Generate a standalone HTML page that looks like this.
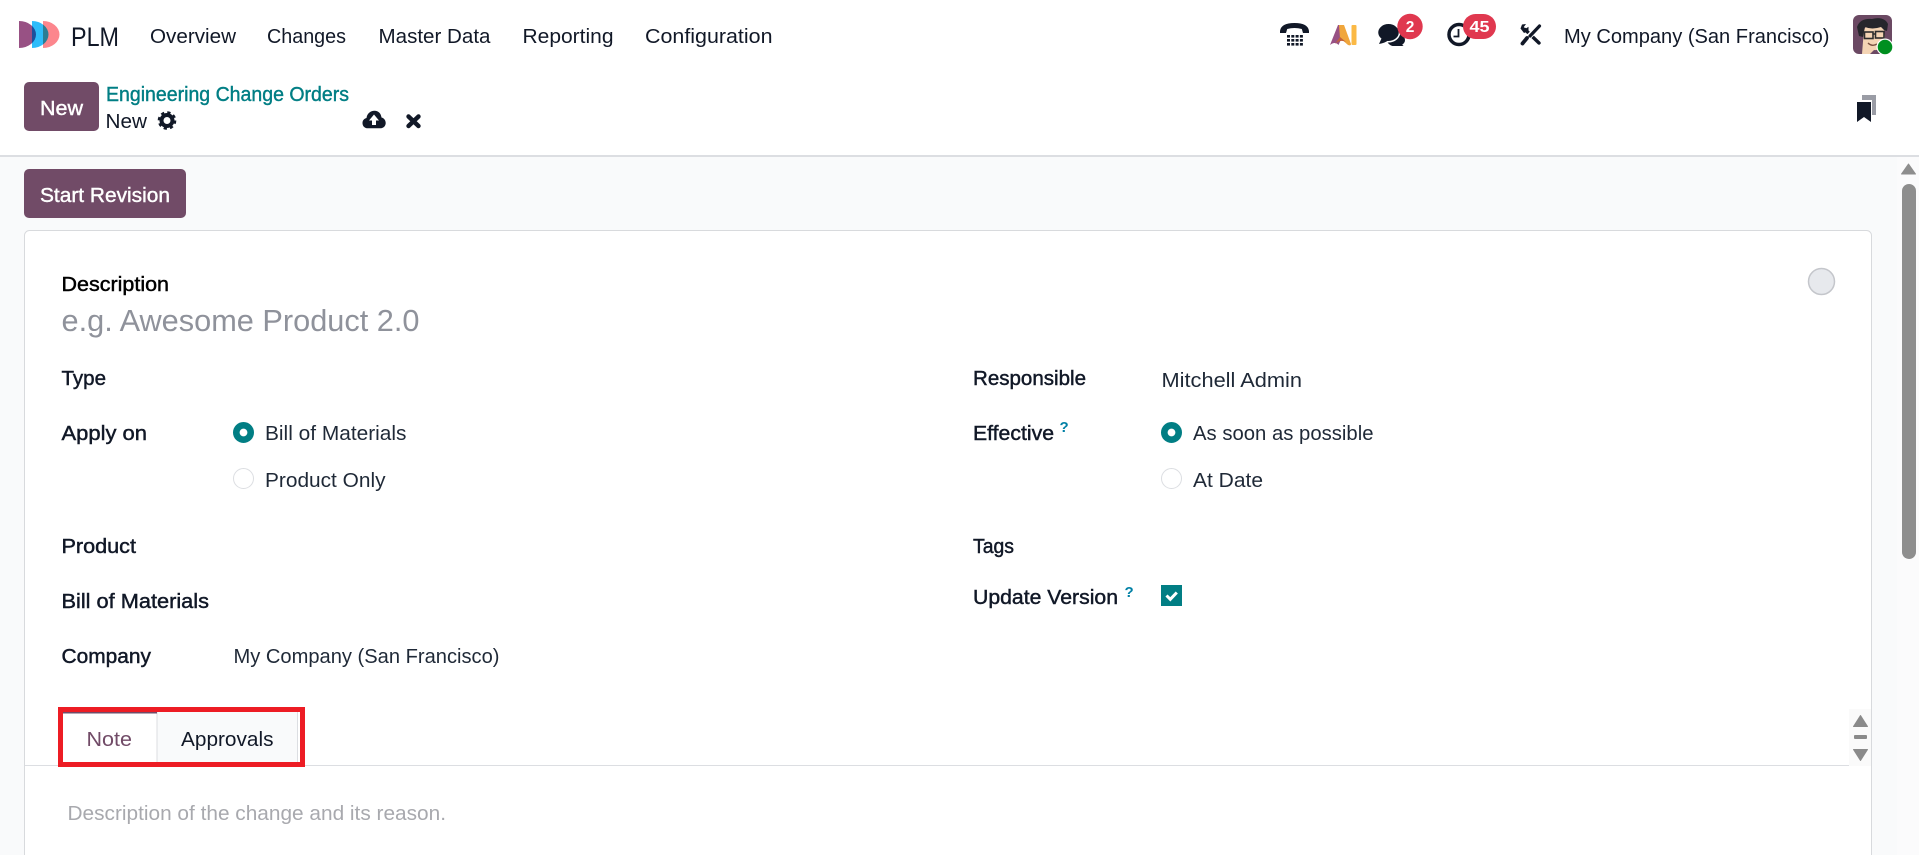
<!DOCTYPE html>
<html lang="en">
<head>
<meta charset="utf-8">
<title>PLM - Engineering Change Orders</title>
<style>
html,body{margin:0;padding:0;width:1919px;height:855px;overflow:hidden;background:#f9fafb}
svg{display:block;position:absolute;left:0;top:0;overflow:hidden}
text{font-family:"Liberation Sans",sans-serif;font-size:20.5px;fill:#1f2937;white-space:pre}
.nav{fill:#111827}
.lab{fill:#111827;stroke:#111827;stroke-width:.45px}
.val{fill:#1f2937}
.btn{fill:#fff;stroke:#fff;stroke-width:.4px;font-size:20px}
.q{font-size:15px;font-weight:bold;fill:#0180a5}
.bd{font-size:15.5px;font-weight:bold;fill:#fff}
</style>
</head>
<body>
<svg width="1919" height="855" viewBox="0 0 1919 855" xmlns="http://www.w3.org/2000/svg">
<defs>
<clipPath id="cp"><path d="M19 21A17 13.5 0 0 1 19 48Z"/></clipPath>
<clipPath id="cb"><path d="M32 21A16.5 13.5 0 0 1 32 48Z"/></clipPath>
<clipPath id="av"><rect x="1853" y="15" width="39" height="39" rx="6"/></clipPath>
<clipPath id="chat"><rect x="1370" y="14" width="45" height="32"/></clipPath>
</defs>

<!-- page backgrounds -->
<rect width="1919" height="855" fill="#f9fafb"/>
<rect x="1897" y="157" width="22" height="698" fill="#fbfbfc"/>
<rect width="1919" height="156" fill="#fff"/>
<rect y="155" width="1919" height="2" fill="#dcdee2"/>

<!-- logo -->
<path d="M19 21A17 13.5 0 0 1 19 48Z" fill="#985184"/>
<path d="M32 21A16.5 13.5 0 0 1 32 48Z" fill="#2ebcfa"/>
<path d="M43 21A16.5 13.5 0 0 1 43 48Z" fill="#fc868d"/>
<path d="M32 21A16.5 13.5 0 0 1 32 48Z" fill="#1c4f9c" clip-path="url(#cp)"/>
<path d="M43 21A16.5 13.5 0 0 1 43 48Z" fill="#2a7d94" clip-path="url(#cb)"/>

<!-- top nav -->
<text x="71" y="46" textLength="48" lengthAdjust="spacingAndGlyphs" style="font-size:26.500px" class="nav">PLM</text>
<text x="150" y="43" textLength="86" lengthAdjust="spacingAndGlyphs" class="nav">Overview</text>
<text x="267" y="43" textLength="79" lengthAdjust="spacingAndGlyphs" class="nav">Changes</text>
<text x="378.500" y="43" textLength="112" lengthAdjust="spacingAndGlyphs" class="nav">Master Data</text>
<text x="522.500" y="43" textLength="91" lengthAdjust="spacingAndGlyphs" class="nav">Reporting</text>
<text x="645" y="43" textLength="127.500" lengthAdjust="spacingAndGlyphs" class="nav">Configuration</text>

<!-- phone icon -->
<path d="M1280 31Q1281 23 1294.500 23Q1308 23 1309 31L1309 33L1303 33L1301.800 29Q1294.500 27 1287.200 29L1286 33L1280 33Z" fill="#111827"/>
<g fill="#111827">
<rect x="1287" y="35" width="3" height="2.600"/><rect x="1291.300" y="35" width="3" height="2.600"/><rect x="1295.600" y="35" width="3" height="2.600"/><rect x="1299.900" y="35" width="3" height="2.600"/>
<rect x="1287" y="39" width="3" height="2.600"/><rect x="1291.300" y="39" width="3" height="2.600"/><rect x="1295.600" y="39" width="3" height="2.600"/><rect x="1299.900" y="39" width="3" height="2.600"/>
<rect x="1287" y="43" width="3" height="2.600"/><rect x="1291.300" y="43" width="3" height="2.600"/><rect x="1295.600" y="43" width="3" height="2.600"/><rect x="1299.900" y="43" width="3" height="2.600"/>
</g>

<!-- AI icon -->
<path d="M1330 45L1338 25L1344 25L1344 33L1338.500 45Q1335 41 1330 45Z" fill="#985184"/>
<path d="M1339 25L1344 25L1351 44Q1351 46 1348 45L1340 38Z" fill="#f0a63c"/>
<path d="M1335 44L1340 37L1346 42Q1340 39 1335 44Z" fill="#c2613a"/>
<rect x="1351.500" y="25" width="5" height="20" rx="1" fill="#fbb945"/>

<!-- chat icon -->
<g clip-path="url(#chat)">
<ellipse cx="1396" cy="40" rx="9" ry="6.500" fill="#111827"/>
<path d="M1400 43L1406 48L1396 48Z" fill="#111827"/>
<ellipse cx="1388.500" cy="32.500" rx="11" ry="9.200" fill="#111827" stroke="#fff" stroke-width="1.500"/>
<path d="M1381.500 38.500L1379 44Q1385 43 1388 40.500Z" fill="#111827"/>
</g>
<circle cx="1410" cy="26.500" r="12.700" fill="#e0384f"/>
<text x="1410" y="32" text-anchor="middle" class="bd">2</text>

<!-- clock icon -->
<circle cx="1459" cy="34.500" r="10" fill="none" stroke="#111827" stroke-width="3.500"/>
<path d="M1458.500 29V36.500H1453.500" fill="none" stroke="#111827" stroke-width="1.800"/>
<rect x="1463" y="14" width="33" height="25" rx="12.500" fill="#e0384f"/>
<text x="1479.500" y="32" text-anchor="middle" class="bd" textLength="20" lengthAdjust="spacingAndGlyphs">45</text>

<!-- tools icon -->
<path d="M1525 29.500L1539 43" stroke="#111827" stroke-width="3.400" stroke-linecap="round"/>
<path d="M1520.500 28.500L1522 24.500L1526 24L1523.800 27L1525.500 28.700L1528.500 26.800L1528.500 31L1524 33Z" fill="#111827"/>
<path d="M1539 26.500L1529 36.500" stroke="#fff" stroke-width="5.500"/>
<path d="M1539.500 26L1530 36" stroke="#111827" stroke-width="3.200" stroke-linecap="round"/>
<path d="M1527.500 37L1523 43" stroke="#fff" stroke-width="6"/>
<path d="M1527 38L1522.500 43.500" stroke="#111827" stroke-width="3.800" stroke-linecap="round"/>

<text x="1564" y="43" textLength="265.500" lengthAdjust="spacingAndGlyphs" class="nav">My Company (San Francisco)</text>

<!-- avatar -->
<rect x="1853" y="15" width="39" height="39" rx="6" fill="#6b4963"/>
<g clip-path="url(#av)">
<path d="M1862 54L1864 29Q1872 19 1884 27L1885 40Q1882 51 1874 50L1870 54Z" fill="#f4d4b4"/>
<path d="M1859 36L1857 27Q1860 18 1872 19Q1884 16 1888 24L1887 31L1884 30L1881 27Q1872 30 1865 27L1863 37Z" fill="#26262c"/>
<rect x="1864.500" y="32" width="8.500" height="6.500" fill="none" stroke="#2d2d2d" stroke-width="1.600"/>
<rect x="1875.500" y="31.500" width="8.500" height="6.500" fill="none" stroke="#2d2d2d" stroke-width="1.600"/>
<path d="M1873 34L1875.500 34" stroke="#2d2d2d" stroke-width="1.600"/>
<path d="M1868 43Q1872 47 1877 44" stroke="#7a5040" stroke-width="1.400" fill="none"/>
</g>
<circle cx="1885" cy="47" r="8.500" fill="#fff"/>
<circle cx="1885" cy="47" r="7.300" fill="#008f1f"/>

<!-- control panel -->
<rect x="24" y="82" width="75" height="49" rx="5" fill="#714b67"/>
<text x="40" y="115" textLength="43" lengthAdjust="spacingAndGlyphs" class="btn">New</text>
<text x="106" y="101" textLength="243" lengthAdjust="spacingAndGlyphs" style="fill:#017e84;stroke:#017e84;stroke-width:.4px">Engineering Change Orders</text>
<text x="105.500" y="128" textLength="41.500" lengthAdjust="spacingAndGlyphs" class="nav">New</text>

<!-- gear -->
<circle cx="167" cy="120.500" r="5.500" fill="none" stroke="#111827" stroke-width="4"/>
<circle cx="167" cy="120.500" r="7.800" fill="none" stroke="#111827" stroke-width="3" stroke-dasharray="3.130 3"/>

<!-- cloud upload -->
<path d="M368 128.300C364 128.300 362.500 125.500 362.500 123C362.500 120 364.500 118.500 366.500 118C367 113.500 370.500 110.700 374.500 110.700C378.500 110.700 381 113.500 381.500 117.500C384 118 385.700 120.500 385.700 123C385.700 126 383.500 128.300 380 128.300Z" fill="#111827"/>
<path d="M374 114.500L379 120.500H376V125H372V120.500H369Z" fill="#fff"/>
<!-- discard -->
<path d="M408.500 116.500L418.500 126M418.500 116.500L408.500 126" stroke="#111827" stroke-width="4.400" stroke-linecap="round"/>

<!-- bookmarks -->
<path d="M1862 95H1876V115H1872V100H1862Z" fill="#9a9ca5"/>
<path d="M1857 102H1871V122L1864 117L1857 122Z" fill="#111827"/>

<!-- status button -->
<rect x="24" y="169" width="162" height="49" rx="5" fill="#714b67"/>
<text x="40" y="202" textLength="130" lengthAdjust="spacingAndGlyphs" class="btn">Start Revision</text>

<!-- card -->
<path d="M24.500 860V235.500a5 5 0 0 1 5-5H1866.500a5 5 0 0 1 5 5V860" fill="#fff" stroke="#d8dadd"/>
<circle cx="1821.500" cy="281.500" r="13" fill="#e7e9ed" stroke="#c4c6cb" stroke-width="1.500"/>

<text x="61.500" y="291" textLength="107.500" lengthAdjust="spacingAndGlyphs" class="lab" style="fill:#000;stroke:#000">Description</text>
<text x="61.500" y="331" textLength="358" lengthAdjust="spacingAndGlyphs" style="font-size:31px;fill:#8f929b">e.g. Awesome Product 2.0</text>

<text x="61.500" y="385" textLength="44.500" lengthAdjust="spacingAndGlyphs" class="lab">Type</text>
<text x="61.500" y="440" textLength="85.500" lengthAdjust="spacingAndGlyphs" class="lab">Apply on</text>
<circle cx="243.500" cy="432.500" r="7.200" fill="#fff" stroke="#017e84" stroke-width="6.600"/>
<text x="265" y="440" textLength="141.500" lengthAdjust="spacingAndGlyphs" class="val">Bill of Materials</text>
<circle cx="243.500" cy="478.500" r="10" fill="#fff" stroke="#dcdee2" stroke-width="1"/>
<text x="265" y="487" textLength="120.500" lengthAdjust="spacingAndGlyphs" class="val">Product Only</text>

<text x="61.500" y="553" textLength="74.500" lengthAdjust="spacingAndGlyphs" class="lab">Product</text>
<text x="61.500" y="608" textLength="147.500" lengthAdjust="spacingAndGlyphs" class="lab">Bill of Materials</text>
<text x="61.500" y="663" textLength="89.500" lengthAdjust="spacingAndGlyphs" class="lab">Company</text>
<text x="233.500" y="663" textLength="266" lengthAdjust="spacingAndGlyphs" class="val">My Company (San Francisco)</text>

<text x="973" y="385" textLength="113" lengthAdjust="spacingAndGlyphs" class="lab">Responsible</text>
<text x="1161.500" y="387" textLength="140.500" lengthAdjust="spacingAndGlyphs" class="val">Mitchell Admin</text>
<text x="973" y="440" textLength="81" lengthAdjust="spacingAndGlyphs" class="lab">Effective</text>
<text x="1059.500" y="432" class="q">?</text>
<circle cx="1171.500" cy="432.500" r="7.200" fill="#fff" stroke="#017e84" stroke-width="6.600"/>
<text x="1193" y="440" textLength="180.500" lengthAdjust="spacingAndGlyphs" class="val">As soon as possible</text>
<circle cx="1171.500" cy="478.500" r="10" fill="#fff" stroke="#dcdee2" stroke-width="1"/>
<text x="1193" y="487" textLength="70" lengthAdjust="spacingAndGlyphs" class="val">At Date</text>
<text x="973" y="553" textLength="41" lengthAdjust="spacingAndGlyphs" class="lab">Tags</text>
<text x="973" y="604" textLength="145" lengthAdjust="spacingAndGlyphs" class="lab">Update Version</text>
<text x="1124.500" y="597" class="q">?</text>
<rect x="1161" y="585" width="21" height="21" fill="#017e84"/>
<path d="M1166.500 595.500L1170.300 599.300L1176.800 592.500" fill="none" stroke="#fff" stroke-width="3"/>

<!-- notebook -->
<rect x="25" y="765" width="1824" height="1" fill="#dcdee2"/>
<rect x="63" y="712" width="94" height="54" fill="#fff"/>
<rect x="157" y="712" width="141" height="54" fill="#f9fafb"/>
<rect x="156.500" y="712" width="1" height="54" fill="#dcdee2"/>
<rect x="297" y="712" width="1" height="54" fill="#dcdee2"/>
<rect x="63" y="712" width="94" height="1.500" fill="#714b67"/>
<text x="86.500" y="746" textLength="45.500" lengthAdjust="spacingAndGlyphs" style="fill:#714b67">Note</text>
<text x="181" y="746" textLength="92.500" lengthAdjust="spacingAndGlyphs" class="nav">Approvals</text>
<rect x="60.500" y="709.500" width="242" height="55" fill="none" stroke="#ed1c24" stroke-width="5"/>
<text x="67.500" y="820" textLength="378.500" lengthAdjust="spacingAndGlyphs" style="fill:#a8a9ae">Description of the change and its reason.</text>

<!-- inner scroll arrows -->
<rect x="1849" y="709" width="22" height="57" fill="#fafafa"/>
<path d="M1860.500 715.500L1867.500 726.500H1853.500Z" fill="#8a8a8a" stroke="#8a8a8a" stroke-linejoin="round"/>
<rect x="1854" y="735" width="13" height="4" rx="1" fill="#8a8a8a"/>
<path d="M1860.500 760.500L1867.500 749.500H1853.500Z" fill="#8a8a8a" stroke="#8a8a8a" stroke-linejoin="round"/>

<!-- page scrollbar -->
<path d="M1908.500 164L1915.500 174H1901.500Z" fill="#8e8e8e" stroke="#8e8e8e" stroke-linejoin="round"/>
<rect x="1902" y="184" width="14" height="375" rx="7" fill="#8e8e8e"/>
</svg>
</body>
</html>
